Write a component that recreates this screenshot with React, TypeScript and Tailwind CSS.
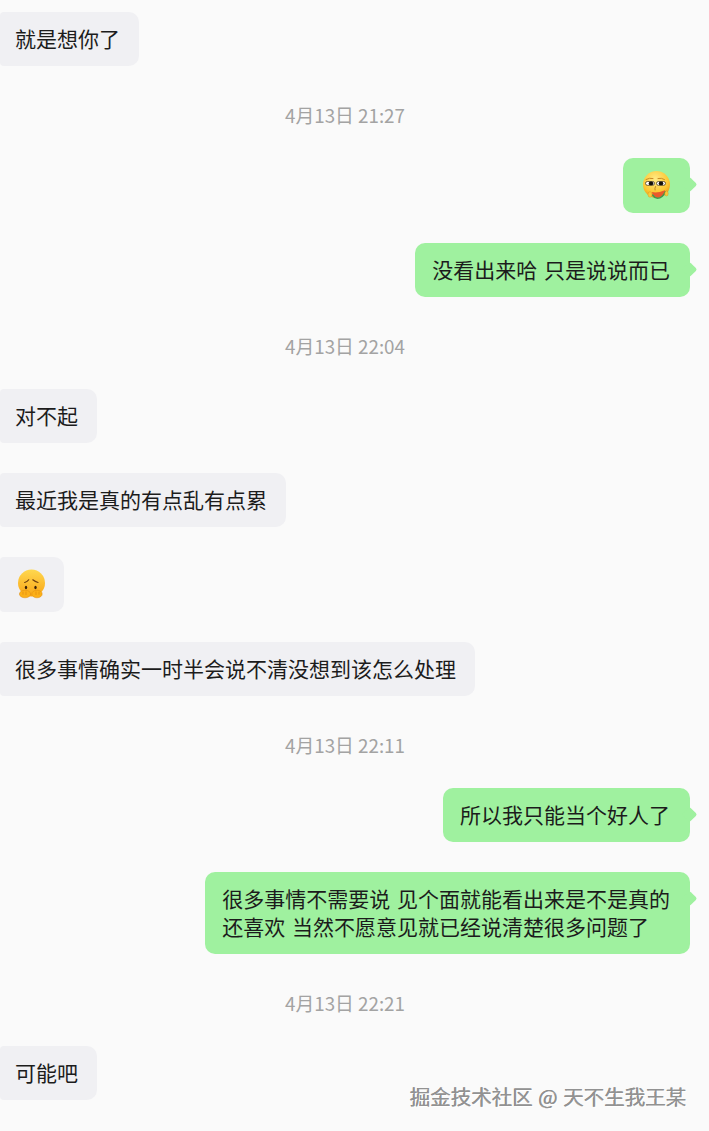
import React from 'react';

const font = { fontFamily: '"Noto Sans CJK SC", "Noto Sans", sans-serif' };

function Time({ text }: { text: string }) {
    return <div className="mt-[35px] mb-[29px] h-[28px] pr-[19px] text-center text-[18.8px] leading-[27px] text-[#a3a3a3]">{text}</div>;
}

function Left({ children, mt = true }: { children: React.ReactNode; mt?: boolean }) {
    return (
        <div className={mt ? 'mt-[30px] flex justify-start' : 'flex justify-start'}>
            <div className="rounded-r-[10px] rounded-l-[4px] bg-[#f0f0f3] pl-[15px] pr-[19px] pt-[12px] pb-[14px] text-[21px] leading-[28px] text-[#1c1c1c]">{children}</div>
        </div>
    );
}

function Right({ children, mt = true }: { children: React.ReactNode; mt?: boolean }) {
    return (
        <div className={mt ? 'mt-[30px] flex justify-end pr-[19px]' : 'flex justify-end pr-[19px]'}>
            <div className="relative max-w-[485px] rounded-[10px] bg-[#9ff19f] pl-[17px] pr-[20px] pt-[12px] pb-[14px] text-[21px] leading-[28px] text-[#1c1c1c] [word-spacing:2px]">
                {children}
                <span className="absolute right-[-5px] top-[21px] h-[11px] w-[11px] rotate-45 rounded-[2px] bg-[#9ff19f]" />
            </div>
        </div>
    );
}

function SmirkEmoji() {
    return (
        <svg width="33" height="30" viewBox="0 0 33 30" className="block overflow-visible">
            <defs>
                <radialGradient id="smirkFace" cx="45%" cy="30%" r="70%">
                    <stop offset="0%" stopColor="#ffea86" />
                    <stop offset="70%" stopColor="#fcc832" />
                    <stop offset="100%" stopColor="#eb9c1c" />
                </radialGradient>
            </defs>
            <circle cx="16.500" cy="14.500" r="13.500" fill="url(#smirkFace)" />
            <path d="M6 9.500q3.500-2 7-1M18 8.500q3.500-1 6.500 1" stroke="#c98a26" strokeWidth="1" fill="none" strokeLinecap="round" />
            <rect x="5.500" y="11.500" width="9" height="3.800" rx="1.900" fill="#fff" stroke="#3a2a10" strokeWidth=".7" />
            <rect x="16.500" y="11.500" width="9" height="3.800" rx="1.900" fill="#fff" stroke="#3a2a10" strokeWidth=".7" />
            <ellipse cx="11" cy="13.400" rx="2.300" ry="1.900" fill="#14100a" />
            <ellipse cx="21" cy="13.400" rx="2.300" ry="1.900" fill="#14100a" />
            <path d="M15.500 16.500q-1 2-.5 3.500" stroke="#b87a1c" strokeWidth=".9" fill="none" strokeLinecap="round" />
            <path d="M12 22q5 1.500 13-1.800q.3 4-3 6.300q-3 1.800-6 1.500q-3.500-1.500-4-6z" fill="#ea5a2c" />
            <path d="M12.500 25q2 3 5 3.200q5 0 7.800-6.500" stroke="#3c9b50" strokeWidth="1.500" fill="none" strokeLinecap="round" />
            <ellipse cx="10" cy="24.500" rx="2" ry="2.800" fill="#fcc83a" stroke="#d2901e" strokeWidth=".4" />
            <ellipse cx="26.500" cy="23.500" rx="1.700" ry="2.500" fill="#fcc83a" stroke="#d2901e" strokeWidth=".4" />
        </svg>
    );
}

function PleadingEmoji() {
    return (
        <svg width="33" height="30" viewBox="0 0 33 30" className="block overflow-visible">
            <defs>
                <linearGradient id="pleadFace" x1="0" y1="0" x2="0" y2="1">
                    <stop offset="0%" stopColor="#ffd84f" />
                    <stop offset="100%" stopColor="#f9a516" />
                </linearGradient>
            </defs>
            <circle cx="16.500" cy="14" r="13.500" fill="url(#pleadFace)" />
            <path d="M9.700 13.500q2.800-.8 4-2.700M23 13.500q-2.800-.8-5.200-2.700" stroke="#70400e" strokeWidth="1.200" fill="none" strokeLinecap="round" />
            <ellipse cx="11" cy="18.500" rx="1.200" ry="1.700" fill="#3a2208" />
            <ellipse cx="20.500" cy="18.500" rx="1.200" ry="1.700" fill="#3a2208" />
            <ellipse cx="10" cy="25" rx="5.600" ry="3.800" fill="#fcb018" stroke="#dd8a14" strokeWidth=".5" />
            <ellipse cx="22" cy="25" rx="5.200" ry="3.800" fill="#fcb018" stroke="#dd8a14" strokeWidth=".5" />
            <path d="M8 22.700v3M11 22.500v3.500M21 22.500v3.500M24 22.700v3" stroke="#e08a14" strokeWidth=".7" />
        </svg>
    );
}

export default function App() {
    return (
        <div className="relative h-[1131px] w-[709px] overflow-hidden bg-[#fafafa] pt-[12px]" style={font}>
            <Left mt={false}>就是想你了</Left>
            <Time text="4月13日 21:27" />
            <Right mt={false}>
                <div className="h-[29px] w-[30px]"><SmirkEmoji /></div>
            </Right>
            <Right>没看出来哈 只是说说而已</Right>
            <Time text="4月13日 22:04" />
            <Left mt={false}>对不起</Left>
            <Left>最近我是真的有点乱有点累</Left>
            <Left>
                <div className="h-[29px] w-[30px]"><PleadingEmoji /></div>
            </Left>
            <Left>很多事情确实一时半会说不清没想到该怎么处理</Left>
            <Time text="4月13日 22:11" />
            <Right mt={false}>所以我只能当个好人了</Right>
            <Right>
                很多事情不需要说 见个面就能看出来是不是真的
                <br />
                还喜欢 当然不愿意见就已经说清楚很多问题了
            </Right>
            <Time text="4月13日 22:21" />
            <Left mt={false}>可能吧</Left>
            <div className="absolute left-[410px] top-[1082px] whitespace-nowrap text-[20.5px] leading-[28px] text-[#929292] [word-spacing:1px] [text-shadow:1px_1px_0_#ffffff,-0.5px_-0.5px_0.5px_#808080]">
                掘金技术社区 @ 天不生我王某
            </div>
        </div>
    );
}
